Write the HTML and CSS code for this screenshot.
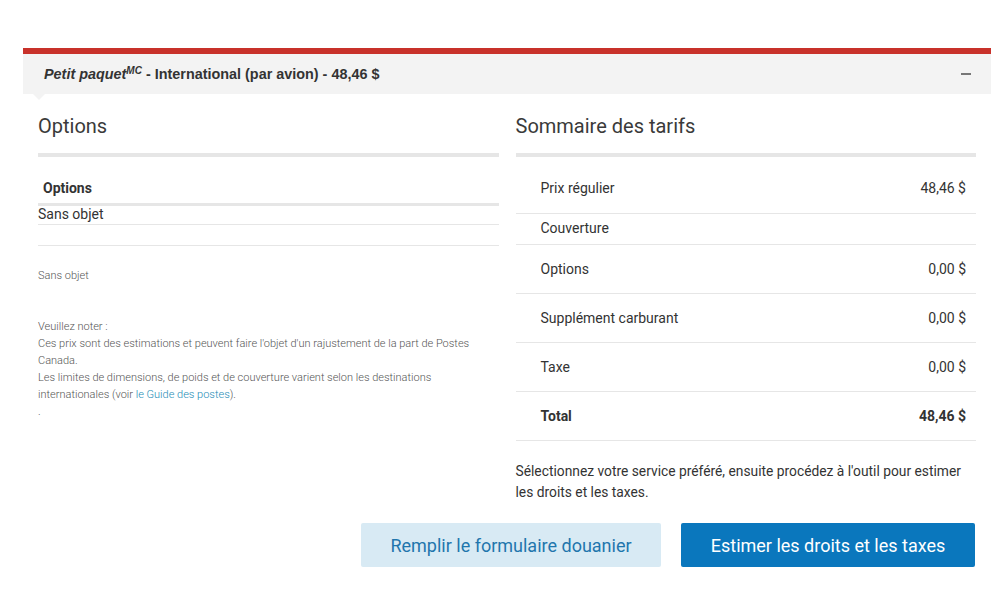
FILE: index.html
```html
<!DOCTYPE html>
<html lang="fr">
<head>
  <meta charset="UTF-8" />
  <meta name="viewport" content="width=device-width, initial-scale=1.0"/>
  <title>Petit paquet - International</title>
  <link rel="stylesheet" href="styles.css">
</head>
<body>
  <div class="panel">
    <div class="panel-head">
      <div class="panel-title"><em>Petit paquet<sup>MC</sup></em> - International (par avion) - 48,46 $</div>
      <span class="toggle"></span>
    </div>

    <div class="panel-body">
      <div class="col">
        <h2>Options</h2>
        <div class="opt-head">Options</div>
        <div class="opt-row">Sans objet</div>
        <div class="opt-row empty"></div>
        <p class="small">Sans objet</p>
        <p class="small note">
          Veuillez noter :<br>
          Ces prix sont des estimations et peuvent faire l'objet d'un rajustement de la part de Postes Canada.<br>
          Les limites de dimensions, de poids et de couverture varient selon les destinations internationales (voir <a href="#">le Guide des postes</a>).<br>
          .
        </p>
      </div>

      <div class="col">
        <h2>Sommaire des tarifs</h2>
        <div class="rates">
          <div class="rate first"><span>Prix régulier</span><span>48,46 $</span></div>
          <div class="rate short"><span>Couverture</span><span></span></div>
          <div class="rate"><span>Options</span><span>0,00 $</span></div>
          <div class="rate"><span>Supplément carburant</span><span>0,00 $</span></div>
          <div class="rate"><span>Taxe</span><span>0,00 $</span></div>
          <div class="rate total"><span>Total</span><span>48,46 $</span></div>
        </div>
        <p class="hint">Sélectionnez votre service préféré, ensuite procédez à l'outil pour estimer les droits et les taxes.</p>
      </div>
    </div>

    <div class="actions">
      <button class="btn light">Remplir le formulaire douanier</button>
      <button class="btn dark">Estimer les droits et les taxes</button>
    </div>
  </div>
</body>
</html>
```

FILE: styles.css
```css
:root {
  --red: #c8312a;
  --head-bg: #f3f3f3;
  --line: #e6e6e6;
  --text: #333;
  --text-light: #555;
  --blue: #0a77bd;
  --blue-light: #d8eaf4;
}

* {
  margin: 0;
  padding: 0;
  box-sizing: border-box;
}

body {
  font-family: Roboto, "Liberation Sans", sans-serif;
  color: var(--text);
  background: #fff;
}

.panel {
  width: 968px;
  margin: 48px 0 0 23px;
  border-top: 6px solid var(--red);
}

.panel-head {
  position: relative;
  display: flex;
  justify-content: space-between;
  align-items: center;
  height: 40px;
  padding: 0 20px 0 21px;
  background: var(--head-bg);
}

.panel-head::after {
  content: "";
  position: absolute;
  left: 10px;
  bottom: -6px;
  border-left: 6px solid transparent;
  border-right: 6px solid transparent;
  border-top: 6px solid var(--head-bg);
}

.panel-title {
  font-family: "Liberation Sans", Arial, sans-serif;
  font-size: 14.4px;
  font-weight: bold;
  color: #333;
}

.panel-title sup {
  font-size: 10px;
  vertical-align: 5px;
  line-height: 0;
}

.toggle {
  width: 10px;
  height: 2px;
  background: #777;
}

.panel-body {
  display: grid;
  grid-template-columns: 1fr 1fr;
  gap: 17px;
  padding: 0 15px;
}

h2 {
  margin-top: 20px;
  padding-bottom: 15px;
  border-bottom: 4px solid var(--line);
  font-size: 20px;
  font-weight: 400;
  line-height: 24px;
  color: #3a3a3a;
}

.opt-head {
  margin-top: 21px;
  padding: 0 0 5px 5px;
  border-bottom: 3px solid var(--line);
  font-size: 14px;
  font-weight: bold;
  line-height: 20px;
}

.opt-row {
  height: 19px;
  border-bottom: 1px solid var(--line);
  font-size: 14px;
  line-height: 16px;
}

.opt-row.empty {
  height: 21px;
}

.small {
  font-size: 11px;
  line-height: 17px;
  color: var(--text-light);
  font-weight: 300;
}

.small:first-of-type {
  margin-top: 21px;
}

.note {
  margin-top: 34px;
}

.note a {
  color: #1a8bb5;
  text-decoration: none;
}

.rate {
  display: flex;
  justify-content: space-between;
  padding: 14px 10px 14px 25px;
  border-bottom: 1px solid var(--line);
  font-size: 14px;
  line-height: 20px;
}

.rate.first {
  padding-top: 21px;
  padding-bottom: 15px;
}

.rate.short {
  padding-top: 4px;
  padding-bottom: 6px;
}

.rate.total {
  font-weight: bold;
}

.hint {
  margin-top: 20px;
  font-size: 13.8px;
  line-height: 21px;
}

.actions {
  display: flex;
  justify-content: flex-end;
  gap: 20px;
  margin-top: 20px;
  padding-right: 16px;
}

.btn {
  height: 44px;
  border: none;
  border-radius: 2px;
  font-family: Roboto, sans-serif;
  font-size: 18px;
  cursor: pointer;
}

.btn.light {
  width: 300px;
  background: var(--blue-light);
  color: #1f76ad;
}

.btn.dark {
  width: 294px;
  background: var(--blue);
  color: #fff;
}
```
